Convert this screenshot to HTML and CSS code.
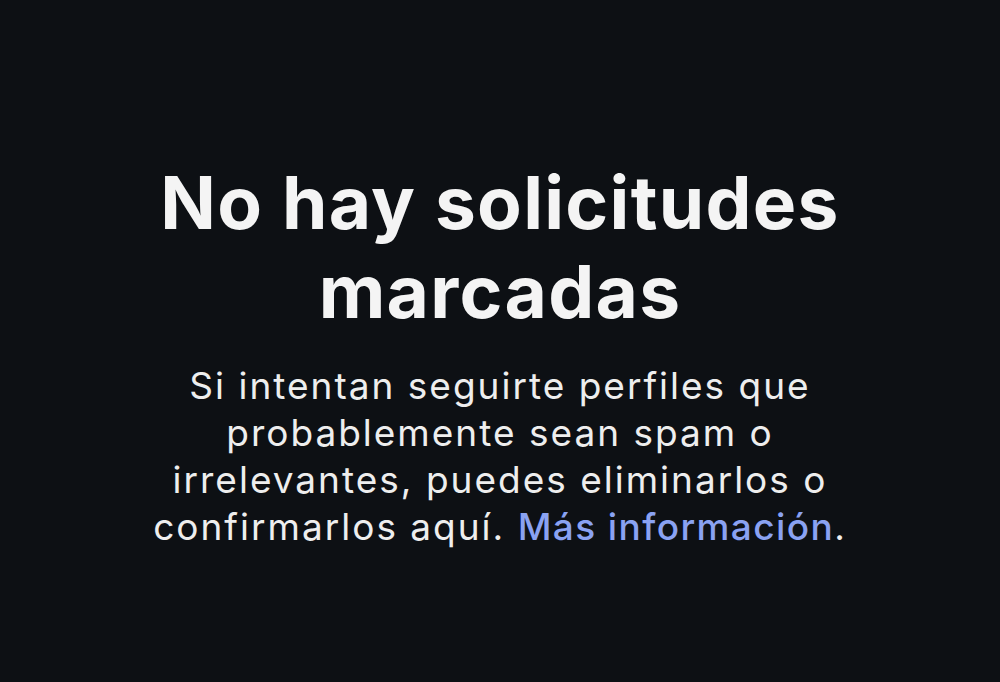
FILE: index.html
```html
<!DOCTYPE html>
<html lang="es">
<head>
<meta charset="utf-8">
<link rel="stylesheet" href="styles.css">
</head>
<body>
<main class="page">
  <section class="empty">
    <h1 class="title">No hay solicitudes marcadas</h1>
    <p class="desc">Si intentan seguirte perfiles que probablemente sean spam o irrelevantes, puedes eliminarlos o confirmarlos aquí. <a class="link" href="#">Más información</a>.</p>
  </section>
</main>
</body>
</html>
```
FILE: styles.css
```css
html, body {
  margin: 0;
  padding: 0;
  background: #0d1014;
}
.page {
  width: 1000px;
  height: 682px;
  box-sizing: border-box;
  padding-top: 26px;
  display: flex;
  justify-content: center;
  align-items: center;
  font-family: Inter, "Noto Sans", sans-serif;
}
.empty {
  width: 720px;
  text-align: center;
  display: flex;
  flex-direction: column;
  align-items: center;
}
.title {
  margin: 0;
  color: #f4f4f4;
  font-size: 73px;
  font-weight: 700;
  line-height: 89px;
  letter-spacing: 1.3px;
}
.desc {
  margin: 26px 0 0;
  color: #eeeeee;
  font-size: 37px;
  font-weight: 400;
  line-height: 47px;
  letter-spacing: 2px;
}
.link {
  color: #8aa2f2;
  text-decoration: none;
  font-weight: 500;
  letter-spacing: 1.4px;
}
```
